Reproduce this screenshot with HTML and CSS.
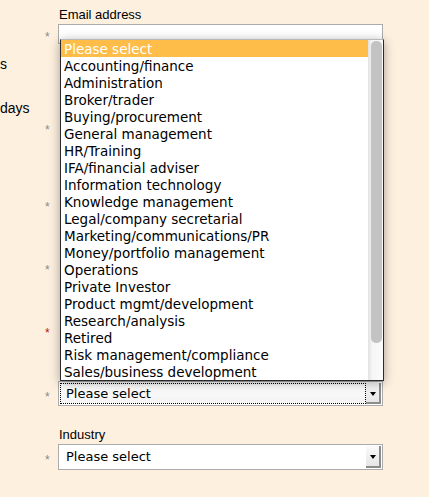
FILE: index.html
```html
<!DOCTYPE html>
<html>
<head>
<meta charset="utf-8">
<link rel="stylesheet" href="styles.css">
</head>
<body>
<div class="form">
  <div class="row label-row"><span></span><span></span><label class="field-label">Email address</label></div>
  <div class="row input-row"><span></span><span class="star">*</span><div class="text-input"></div></div>
  <div class="row side-s"><span class="side">s</span></div>
  <div class="row side-days"><span class="side">days</span></div>
  <div class="row star-row r1"><span></span><span class="star">*</span></div>
  <div class="row star-row r2"><span></span><span class="star">*</span></div>
  <div class="row star-row r3"><span></span><span class="star">*</span></div>
  <div class="row star-row r4"><span></span><span class="star red">*</span></div>
  <div class="row select-row"><span></span><span class="star">*</span>
    <div class="select focused">
      <div class="focus-ring">Please select</div>
      <div class="arrow-btn"><i class="tri"></i></div>
      <div class="popup">
        <ul class="options">
          <li class="sel">Please select</li>
          <li>Accounting/finance</li>
          <li>Administration</li>
          <li>Broker/trader</li>
          <li>Buying/procurement</li>
          <li>General management</li>
          <li>HR/Training</li>
          <li>IFA/financial adviser</li>
          <li>Information technology</li>
          <li>Knowledge management</li>
          <li>Legal/company secretarial</li>
          <li>Marketing/communications/PR</li>
          <li>Money/portfolio management</li>
          <li>Operations</li>
          <li>Private Investor</li>
          <li>Product mgmt/development</li>
          <li>Research/analysis</li>
          <li>Retired</li>
          <li>Risk management/compliance</li>
          <li>Sales/business development</li>
        </ul>
        <div class="scrollbar"><div class="thumb"></div></div>
      </div>
    </div>
  </div>
  <div class="row label-row industry"><span></span><span></span><label class="field-label">Industry</label></div>
  <div class="row select-row tall"><span></span><span class="star">*</span>
    <div class="select">
      <div class="value">Please select</div>
      <div class="arrow-btn"><i class="tri"></i></div>
    </div>
  </div>
</div>
</body>
</html>
```

FILE: styles.css
```css
html, body {
  margin: 0;
  padding: 0;
  background: #fdf0df;
}
body {
  width: 429px;
  height: 497px;
  overflow: hidden;
  font-family: "Liberation Sans", Arial, sans-serif;
  color: #000;
}
.form {
  display: flex;
  flex-direction: column;
}
.row {
  display: grid;
  grid-template-columns: 45px 13px 325px;
  align-items: center;
  height: 20px;
}
.label-row {
  height: 24px;
  box-sizing: border-box;
  padding-top: 7px;
  align-items: start;
}
.field-label {
  font-size: 13px;
  line-height: 15px;
  padding-left: 1px;
}
.star {
  font-size: 12px;
  line-height: 12px;
  color: #8a8a8a;
  padding-top: 6px;
}
.star.red { color: #c0101c; }
.side {
  font-size: 14px;
  line-height: 20px;
  white-space: nowrap;
}
.side-s { margin-top: 10px; }
.side-days { margin-top: 24px; height: 19px; }
.r1 { margin-top: 0; }
.r2 { margin-top: 57px; }
.r3 { margin-top: 43px; }
.r4 { margin-top: 43px; }

.text-input {
  height: 20px;
  box-sizing: border-box;
  border: 1px solid #ababab;
  background: #fff;
}

.select-row {
  height: 24px;
  margin-top: 41px;
}
.select-row.tall {
  height: 25px;
  margin-top: 0;
}
.label-row.industry {
  margin-top: 22px;
  height: 17px;
  padding-top: 0;
}
.select {
  position: relative;
  height: 100%;
  box-sizing: border-box;
  border: 1px solid #ababab;
  background: #fff;
  display: flex;
  align-items: stretch;
  padding: 1px;
  font-family: "DejaVu Sans", sans-serif;
  font-size: 13px;
}
.focus-ring {
  flex: 1;
  border: 1px dotted #000;
  padding-left: 5px;
  line-height: 19px;
  background: linear-gradient(#fff, #f3f3f3);
}
.value {
  flex: 1;
  padding-left: 6px;
  line-height: 22px;
}
.arrow-btn {
  width: 15px;
  box-sizing: border-box;
  background: linear-gradient(#fafafa, #e6e6e6);
  border-right: 2px solid #8c8c8c;
  border-bottom: 2px solid #8c8c8c;
  display: flex;
  align-items: center;
  justify-content: center;
}
.tri {
  width: 0;
  height: 0;
  border-left: 3px solid transparent;
  border-right: 3px solid transparent;
  border-top: 4px solid #000;
  margin-top: 2px;
}

.popup {
  position: absolute;
  left: 1px;
  bottom: calc(100% + 1px);
  width: 324px;
  box-sizing: border-box;
  border: 1px solid #2a2a2a;
  border-top-color: #b8b8b8;
  background: #fff;
  display: flex;
  box-shadow: 0 2px 10px rgba(0, 0, 0, 0.35);
  z-index: 5;
}
.options {
  list-style: none;
  margin: 0;
  padding: 0;
  flex: 1;
}
.options li {
  height: 17px;
  box-sizing: border-box;
  padding-top: 1px;
  line-height: 17px;
  padding-left: 3px;
  white-space: nowrap;
  font-size: 13.5px;
}
.options li.sel {
  background: #febd48;
  color: #fff;
}
.scrollbar {
  width: 15px;
  background: linear-gradient(to right, #e2e2e2, #f6f6f6 30%, #fbfbfb);
  padding: 1px 1px 0 3px;
  box-sizing: border-box;
}
.thumb {
  height: 302px;
  background: #c3c3c3;
  border-radius: 5px;
}
```
